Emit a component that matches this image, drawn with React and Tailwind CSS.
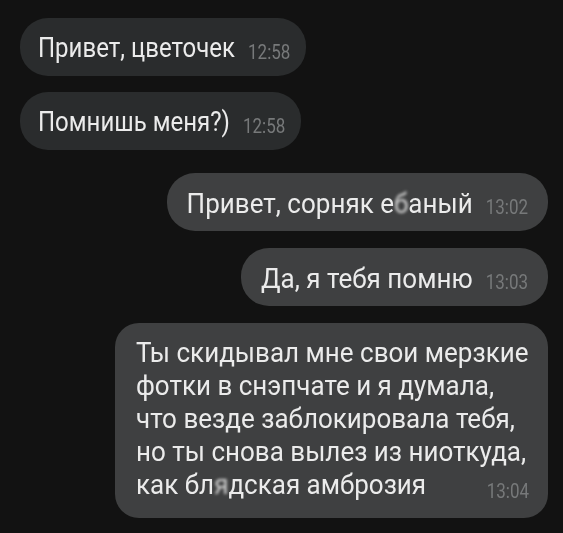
import React from 'react';

const font = { fontFamily: 'Roboto, "Noto Sans", sans-serif' };

// the screenshot is stretched vertically, so glyphs are a bit taller than Roboto's
function Tall({ children, className = 'scale-y-[1.18]' }) {
    return <span className={`inline-block whitespace-nowrap origin-[50%_80%] ${className}`}>{children}</span>;
}

function Time({ children }) {
    return (
        <span className="ml-[13px] mb-[1px] shrink-0 text-[17px] leading-none tracking-normal text-[#77797a]">
            <Tall>{children}</Tall>
        </span>
    );
}

function Incoming({ text, time }) {
    return (
        <div className="flex">
            <div className="flex items-end h-[58px] pl-[18px] pr-[16px] pb-[13px] rounded-[28px] bg-[#2a2c2d]">
                <span className="text-[24px] leading-[28px] text-[#ebebeb]"><Tall>{text}</Tall></span>
                <Time>{time}</Time>
            </div>
        </div>
    );
}

function Outgoing({ children, time }) {
    return (
        <div className="flex justify-end">
            <div className="flex items-end h-[58px] pl-[20px] pr-[20px] pb-[13px] rounded-[28px] bg-[#3f4041]">
                <span className="text-[26px] leading-[28px] text-[#ebebeb]">
                    <Tall className="scale-y-[1.09]">{children}</Tall>
                </span>
                <Time>{time}</Time>
            </div>
        </div>
    );
}

export default function App() {
    const blur = 'inline-block blur-[1.5px] text-[#d4d4d4]';
    const line = 'scale-y-[1.09]';
    return (
        <div className="w-[563px] h-[533px] bg-[#121212] overflow-hidden" style={font}>
            <div className="flex flex-col pt-[18px] pl-[20px] pr-[15px]">
                <Incoming text="Привет, цветочек" time="12:58" />
                <div className="mt-[16px]">
                    <Incoming text="Помнишь меня?)" time="12:58" />
                </div>
                <div className="mt-[23px]">
                    <Outgoing time="13:02">
                        Привет, сорняк е<span className={blur}>б</span>аный
                    </Outgoing>
                </div>
                <div className="mt-[17px]">
                    <Outgoing time="13:03">Да, я тебя помню</Outgoing>
                </div>
                <div className="mt-[17px] flex justify-end">
                    <div className="w-[433px] pl-[21px] pr-[19px] pt-[14px] pb-[16px] rounded-[24px] bg-[#3f4041] text-[26px] leading-[33px] text-[#ebebeb]">
                        <div><Tall className={line}>Ты скидывал мне свои мерзкие</Tall></div>
                        <div><Tall className={line}>фотки в снэпчате и я думала,</Tall></div>
                        <div><Tall className={line}>что везде заблокировала тебя,</Tall></div>
                        <div><Tall className={line}>но ты снова вылез из ниоткуда,</Tall></div>
                        <div className="flex items-end justify-between">
                            <Tall className={line}>как бл<span className={blur}>я</span>дская амброзия</Tall>
                            <Time>13:04</Time>
                        </div>
                    </div>
                </div>
            </div>
        </div>
    );
}
